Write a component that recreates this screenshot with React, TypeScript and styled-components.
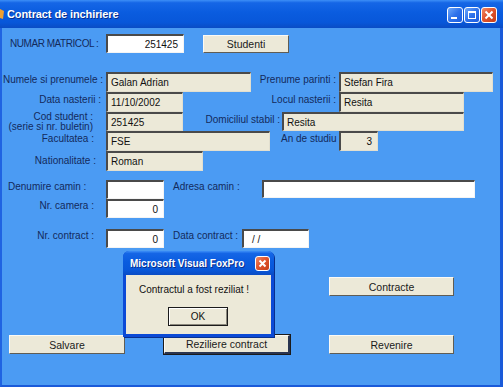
import React from "react";
import styled, { createGlobalStyle, css } from "styled-components";

const GlobalStyle = createGlobalStyle`
  html, body {
    margin: 0;
    padding: 0;
    overflow: hidden;
    background: #4b9bf3;
  }
  body {
    font-family: "Liberation Sans", Arial, sans-serif;
  }
`;

const App: React.FC = () => {
  return (
    <>
      <GlobalStyle />
      <Window>
        <TitleBar>
          <AppIcon width="5" height="12" viewBox="0 0 5 12">
            <path d="M0 1 L4 3 L3 11 L0 10 Z" fill="#f0a030" />
          </AppIcon>
          <TitleText>Contract de inchiriere</TitleText>
          <TitleButtons>
            <TitleBtn>
              <svg width="14" height="14" viewBox="0 0 14 14">
                <rect x="3" y="9" width="6" height="2" fill="#fff" />
              </svg>
            </TitleBtn>
            <TitleBtn>
              <svg width="14" height="14" viewBox="0 0 14 14">
                <rect x="3.5" y="3.5" width="7" height="7" fill="none" stroke="#fff" />
                <rect x="3" y="3" width="8" height="2" fill="#fff" />
              </svg>
            </TitleBtn>
            <TitleBtn $close>
              <svg width="14" height="14" viewBox="0 0 14 14">
                <path d="M3.5 3.5 L10.5 10.5 M10.5 3.5 L3.5 10.5" stroke="#fff" strokeWidth="2" />
              </svg>
            </TitleBtn>
          </TitleButtons>
        </TitleBar>

        <Body>
          <TopRow>
            <MatricolLabel>NUMAR MATRICOL :</MatricolLabel>
            <Field $w={78} $h={19} $align="right">251425</Field>
            <Button $w={86} $ml={19} $h={18}>Studenti</Button>
          </TopRow>

          <Row $h={20} $mt={19}>
            <Label $w={104} $pr={3}>Numele si prenumele :</Label>
            <Field $w={145} $ro>Galan Adrian</Field>
            <Label $w={88} $pr={3}>Prenume parinti :</Label>
            <Field $w={154} $ro>Stefan Fira</Field>
          </Row>
          <Row $h={20}>
            <Label $w={104} $pr={5}>Data nasterii :</Label>
            <Field $w={77} $ro>11/10/2002</Field>
            <Label $w={156} $pr={3}>Locul nasterii :</Label>
            <Field $w={125} $ro>Resita</Field>
          </Row>
          <Row $h={19}>
            <Label $w={104} $pr={13} $pt={0} $lh={10}>
              Cod student :
              <br />
              (serie si nr. buletin)
            </Label>
            <Field $w={77} $ro>251425</Field>
            <Label $w={99} $pr={2}>Domiciliul stabil :</Label>
            <Field $w={182} $ro>Resita</Field>
          </Row>
          <Row $h={20}>
            <Label $w={104} $pr={12} $pt={2}>Facultatea :</Label>
            <Field $w={164} $ro>FSE</Field>
            <Label $w={69} $pl={11} $align="left" $pt={2}>An de studiu</Label>
            <Field $w={39} $ro $align="right">3</Field>
          </Row>
          <Row $h={20}>
            <Label $w={104} $pr={10} $pt={4}>Nationalitate :</Label>
            <Field $w={97} $ro>Roman</Field>
          </Row>

          <Row $h={19} $mt={9}>
            <Label $w={104} $pl={6} $align="left" $pt={1}>Denumire camin :</Label>
            <Field $w={58} />
            <Label $w={98} $pl={9} $align="left" $pt={1}>Adresa camin :</Label>
            <Field $w={213} $h={18} />
          </Row>
          <Row $h={19}>
            <Label $w={104} $pr={12} $pt={1}>Nr. camera :</Label>
            <Field $w={58} $align="right">0</Field>
          </Row>
          <Row $h={19} $mt={11}>
            <Label $w={104} $pr={12} $pt={1}>Nr. contract :</Label>
            <Field $w={58} $align="right">0</Field>
            <Label $w={78} $pl={9} $align="left" $pt={1}>Data contract :</Label>
            <Field $w={67} $pl={8}>/ /</Field>
          </Row>

          <Row $h={19} $mt={29}>
            <Button $w={125} $ml={327}>Contracte</Button>
          </Row>
          <Row $h={20} $mt={39}>
            <Button $w={116} $ml={7}>Salvare</Button>
            <Button $w={126} $ml={39} $focus>Reziliere contract</Button>
            <Button $w={125} $ml={39}>Revenire</Button>
          </Row>
        </Body>

        <Dialog>
          <DialogTitle>
            <DialogTitleText>Microsoft Visual FoxPro</DialogTitleText>
            <TitleBtn $close $small>
              <svg width="13" height="13" viewBox="0 0 13 13">
                <path d="M3.5 3.5 L9.5 9.5 M9.5 3.5 L3.5 9.5" stroke="#fff" strokeWidth="2" />
              </svg>
            </TitleBtn>
          </DialogTitle>
          <DialogBody>
            <Message>Contractul a fost reziliat !</Message>
            <OkButton>OK</OkButton>
          </DialogBody>
        </Dialog>
      </Window>
    </>
  );
};
export default App;

const xpTitle = css`
  background: linear-gradient(
    180deg,
    #3d8ff7 0%,
    #1566e6 10%,
    #0a5cdf 45%,
    #0857d9 80%,
    #0a4cc4 100%
  );
`;

const Window = styled.div`
  position: relative;
  width: 503px;
  height: 387px;
  display: flex;
  flex-direction: column;
  background: #4b9bf3;
  overflow: hidden;
`;

const TitleBar = styled.div`
  ${xpTitle};
  height: 28px;
  flex-shrink: 0;
  display: flex;
  align-items: center;
`;

const AppIcon = styled.svg`
  margin-right: 2px;
`;

const TitleText = styled.div`
  color: #fff;
  font-size: 11px;
  font-weight: bold;
  letter-spacing: -0.1px;
  text-shadow: 1px 1px 0 #0a2f8c;
`;

const TitleButtons = styled.div`
  margin-left: auto;
  margin-right: 6px;
  display: flex;
  gap: 1px;
  margin-top: 2px;
`;

const TitleBtn = styled.div<{ $close?: boolean; $small?: boolean }>`
  width: ${(p) => (p.$small ? 15 : 16)}px;
  height: ${(p) => (p.$small ? 15 : 16)}px;
  box-sizing: border-box;
  border: 1px solid #fff;
  border-radius: 3px;
  display: flex;
  align-items: center;
  justify-content: center;
  background: ${(p) =>
    p.$close
      ? "linear-gradient(135deg, #f08a66 0%, #e1552e 45%, #c63d17 100%)"
      : "linear-gradient(135deg, #6ea8fb 0%, #2f72ea 50%, #1a5ce0 100%)"};
`;

const Body = styled.div`
  flex: 1;
  display: flex;
  flex-direction: column;
  border-left: 2px solid #1f63e2;
  border-right: 3px solid #1a5ad9;
  border-bottom: 2px solid #1a5ad9;
`;

const TopRow = styled.div`
  margin-top: 6px;
  height: 19px;
  display: flex;
  align-items: center;
  padding-left: 8px;
`;

const MatricolLabel = styled.div`
  width: 96px;
  flex-shrink: 0;
  font-size: 10px;
  letter-spacing: -0.45px;
  color: #132a5c;
  white-space: nowrap;
`;

const Row = styled.div<{ $h: number; $mt?: number }>`
  display: flex;
  align-items: flex-start;
  height: ${(p) => p.$h}px;
  margin-top: ${(p) => p.$mt ?? 0}px;
`;

const Label = styled.div<{
  $w: number;
  $pr?: number;
  $pl?: number;
  $pt?: number;
  $lh?: number;
  $align?: "left" | "right";
}>`
  width: ${(p) => p.$w}px;
  flex-shrink: 0;
  box-sizing: border-box;
  padding: ${(p) => p.$pt ?? 2}px ${(p) => p.$pr ?? 0}px 0 ${(p) => p.$pl ?? 0}px;
  text-align: ${(p) => p.$align ?? "right"};
  font-size: 10px;
  line-height: ${(p) => p.$lh ?? 11}px;
  color: #132a5c;
  white-space: nowrap;
`;

const Field = styled.div<{
  $w: number;
  $h?: number;
  $ro?: boolean;
  $align?: "left" | "right";
  $pl?: number;
}>`
  width: ${(p) => p.$w}px;
  height: ${(p) => (p.$h ? `${p.$h}px` : "100%")};
  flex-shrink: 0;
  box-sizing: border-box;
  background: ${(p) => (p.$ro ? "#ece9d8" : "#fff")};
  border-top: 2px solid #4a4a4a;
  border-left: 2px solid #4a4a4a;
  border-bottom: 1px solid ${(p) => (p.$ro ? "#e2dfcf" : "#f4f4f4")};
  border-right: 1px solid ${(p) => (p.$ro ? "#e2dfcf" : "#f4f4f4")};
  display: flex;
  align-items: center;
  justify-content: ${(p) => (p.$align === "right" ? "flex-end" : "flex-start")};
  padding: 0 5px 0 ${(p) => p.$pl ?? 3}px;
  font-size: 10px;
  color: #111;
  white-space: nowrap;
`;

const Button = styled.div<{ $w: number; $ml: number; $h?: number; $focus?: boolean }>`
  width: ${(p) => p.$w}px;
  height: ${(p) => p.$h ?? 19}px;
  margin-left: ${(p) => p.$ml}px;
  flex-shrink: 0;
  box-sizing: border-box;
  background: #ece9d8;
  border-top: 1px solid #fbfaf5;
  border-left: 1px solid #fbfaf5;
  border-bottom: 1px solid #5f5d55;
  border-right: 1px solid #5f5d55;
  display: flex;
  align-items: center;
  justify-content: center;
  font-size: 10.5px;
  color: #1a1a1a;
  ${(p) =>
    p.$focus &&
    css`
      outline: 1px solid #1b1b1b;
      outline-offset: 0;
      border-bottom: 2px solid #2a3550;
      border-right: 2px solid #2a3550;
    `}
`;

const Dialog = styled.div`
  position: absolute;
  left: 123px;
  top: 251px;
  width: 151px;
  height: 86px;
  box-sizing: border-box;
  display: flex;
  flex-direction: column;
  background: #0b4ad6;
  border-radius: 6px 6px 0 0;
  padding: 0 3px 3px;
  box-shadow: 1px 1px 0 #09308e;
`;

const DialogTitle = styled.div`
  ${xpTitle};
  height: 24px;
  margin: 0 -3px;
  border-radius: 6px 6px 0 0;
  display: flex;
  align-items: center;
  padding: 0 4px 0 7px;
`;

const DialogTitleText = styled.div`
  flex: 1;
  color: #fff;
  font-size: 10px;
  font-weight: bold;
  text-shadow: 1px 1px 0 #0a2f8c;
`;

const DialogBody = styled.div`
  flex: 1;
  background: #ece9d8;
  display: flex;
  flex-direction: column;
`;

const Message = styled.div`
  padding: 9px 0 0 13px;
  font-size: 10px;
  line-height: 11px;
  color: #111;
`;

const OkButton = styled.div`
  margin: 12px 0 0 42px;
  width: 60px;
  height: 19px;
  box-sizing: border-box;
  border: 1px solid #1b1b1b;
  box-shadow: inset 1px 1px #fff, inset -1px -1px #8a877b;
  background: #ece9d8;
  display: flex;
  align-items: center;
  justify-content: center;
  font-size: 10px;
  color: #111;
`;
